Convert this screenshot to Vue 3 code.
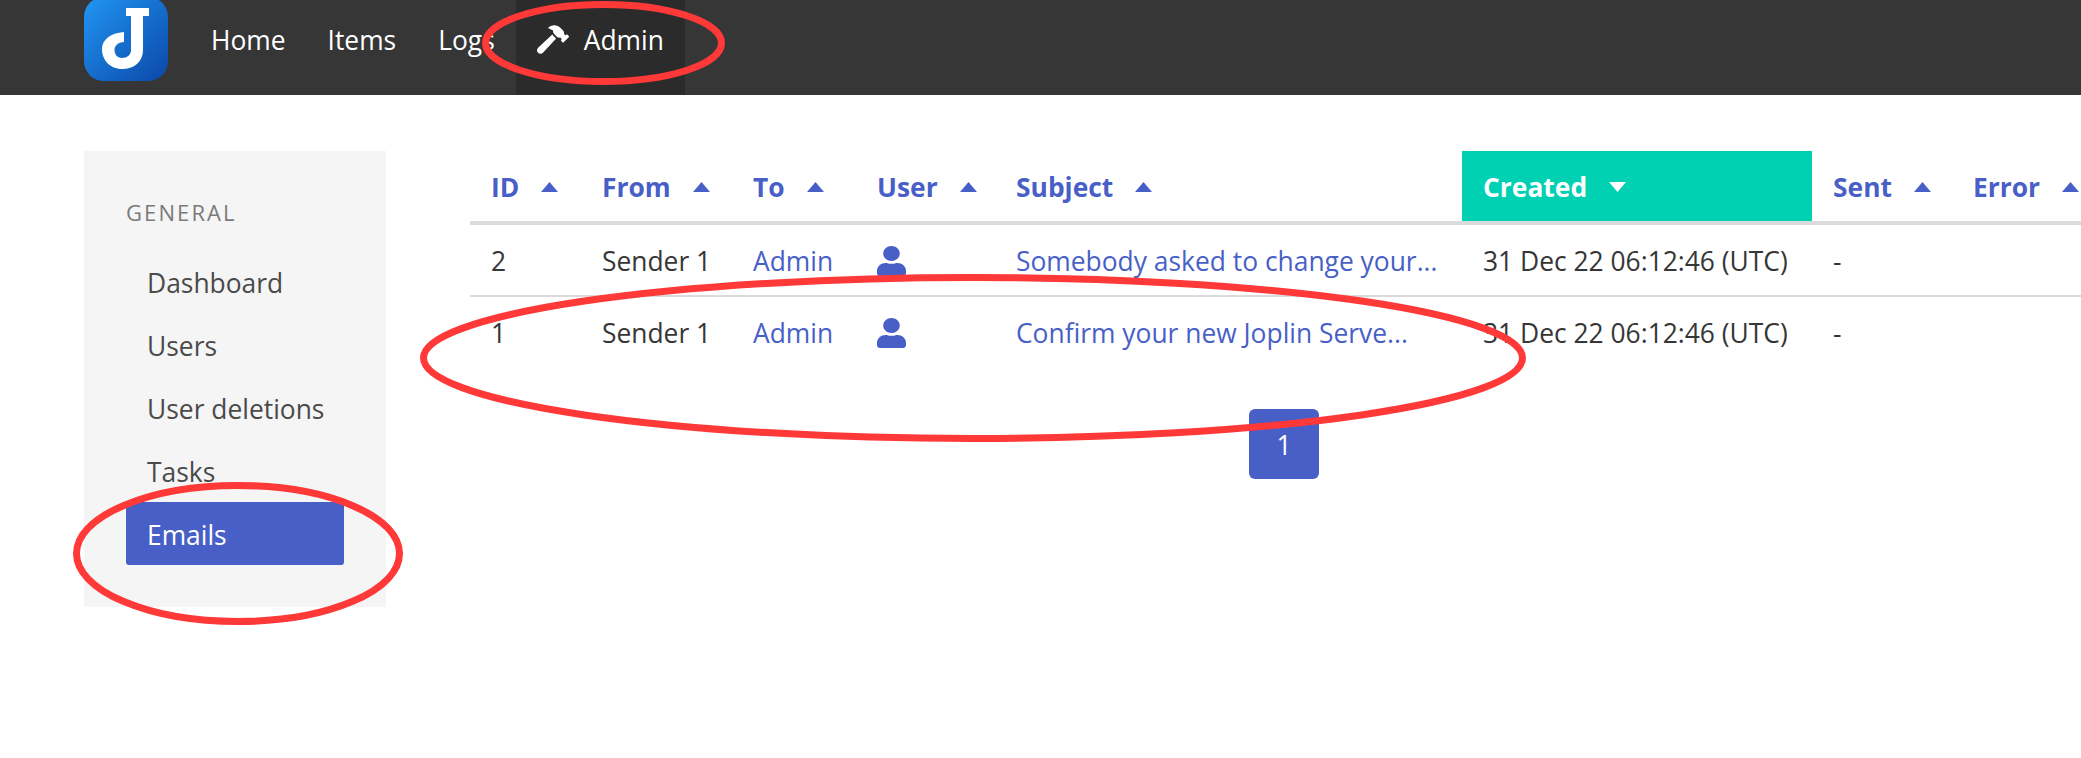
<template>
  <div class="page">
    <nav class="navbar">
      <svg class="logo" viewBox="84 -3 84 84">
        <defs>
          <linearGradient id="logoGrad" x1="0" y1="0" x2="1" y2="1">
            <stop offset="0" stop-color="#2196f3" />
            <stop offset="1" stop-color="#0b47a8" />
          </linearGradient>
        </defs>
        <rect x="84" y="-3" width="84" height="84" rx="20" fill="url(#logoGrad)" />
        <path
          fill="#fff"
          d="M126 8H149V16H143V50C143 62 134 69 122 69C110 69 102 60 102 49C102 40 110 33 124 32V42C118 42 114.5 46 114.5 50C114.5 55 118 58 122 58C127 58 131 55 131 50V16H126Z"
        />
      </svg>
      <a v-for="item in navItems" :key="item" class="nav-item">{{ item }}</a>
      <a class="nav-item is-active">
        <svg class="hammer" viewBox="0 0 576 512">
          <path
            fill="#fff"
            d="M571.31 193.94l-22.63-22.63c-6.25-6.25-16.38-6.25-22.63 0l-11.31 11.31-28.9-28.9c5.63-21.31.36-44.9-16.35-61.61l-45.25-45.25c-62.48-62.48-163.79-62.48-226.28 0l90.51 45.25v18.75c0 16.97 6.74 33.25 18.75 45.25l49.14 49.14c16.71 16.71 40.3 21.98 61.61 16.35l28.9 28.9-11.31 11.31c-6.25 6.25-6.25 16.38 0 22.63l22.63 22.63c6.25 6.25 16.38 6.25 22.63 0l90.51-90.51c6.25-6.25 6.25-16.38 0-22.63zm-286.72-15.2c-3.7-3.7-6.84-7.79-9.85-11.95L19.64 404.96c-25.57 23.88-26.26 64.19-1.53 88.93s65.05 24.05 88.93-1.53l238.13-255.07c-3.96-2.91-7.9-5.87-11.44-9.41l-49.14-49.14z"
          />
        </svg>
        Admin
      </a>
    </nav>

    <main class="main">
      <aside class="sidebar">
        <p class="menu-label">GENERAL</p>
        <ul class="menu-list">
          <li v-for="item in menuItems" :key="item">
            <a :class="{ active: item === 'Emails' }">{{ item }}</a>
          </li>
        </ul>
      </aside>

      <section class="content">
        <table class="table">
          <colgroup>
            <col v-for="col in columns" :key="col.label" :style="{ width: col.width + 'px' }" />
          </colgroup>
          <thead>
            <tr>
              <th v-for="col in columns" :key="col.label" :class="{ sorted: col.sorted }">
                <span class="th-inner">
                  {{ col.label }}
                  <svg class="caret" viewBox="0 0 17 10">
                    <path :d="col.sorted ? 'M0 0H17L8.5 10Z' : 'M8.5 0L17 10H0Z'" />
                  </svg>
                </span>
              </th>
            </tr>
          </thead>
          <tbody>
            <tr v-for="row in rows" :key="row.id">
              <td>{{ row.id }}</td>
              <td>Sender 1</td>
              <td class="link">Admin</td>
              <td>
                <svg class="user" viewBox="0 0 448 512" preserveAspectRatio="none">
                  <path
                    d="M224 256c70.7 0 128-57.3 128-128S294.7 0 224 0 96 57.3 96 128s57.3 128 128 128zm89.6 32h-16.7c-22.2 10.2-46.9 16-72.9 16s-50.6-5.8-72.9-16h-16.7C60.2 288 0 348.2 0 422.4V464c0 26.5 21.5 48 48 48h352c26.5 0 48-21.5 48-48v-41.6c0-74.2-60.2-134.4-134.4-134.4z"
                  />
                </svg>
              </td>
              <td class="link">{{ row.subject }}</td>
              <td>31 Dec 22 06:12:46 (UTC)</td>
              <td>-</td>
              <td></td>
            </tr>
          </tbody>
        </table>
        <div class="pagination">
          <a class="page-btn">1</a>
        </div>
      </section>
    </main>

    <!-- red marks drawn over the screenshot -->
    <svg class="marks" viewBox="0 0 2081 758">
      <ellipse cx="603.5" cy="43" rx="118" ry="38.5" />
      <ellipse cx="238" cy="553.5" rx="161.5" ry="68" />
      <ellipse cx="973" cy="358" rx="549.5" ry="80.5" />
    </svg>
  </div>
</template>

<script setup>
const navItems = ['Home', 'Items', 'Logs']
const menuItems = ['Dashboard', 'Users', 'User deletions', 'Tasks', 'Emails']

const columns = [
  { label: 'ID', width: 111 },
  { label: 'From', width: 151 },
  { label: 'To', width: 124 },
  { label: 'User', width: 139 },
  { label: 'Subject', width: 467 },
  { label: 'Created', width: 350, sorted: true },
  { label: 'Sent', width: 140 },
  { label: 'Error', width: 146 }
]

const rows = [
  { id: 2, subject: 'Somebody asked to change your...' },
  { id: 1, subject: 'Confirm your new Joplin Serve...' }
]
</script>

<style>
html,
body {
  margin: 0;
  background: #fff;
}
</style>

<style scoped>
.page {
  position: relative;
  width: 2081px;
  height: 758px;
  overflow: hidden;
  font-family: "Open Sans", "Noto Sans", sans-serif;
  font-size: 26.4px;
  color: #363636;
}

.navbar {
  display: flex;
  align-items: stretch;
  height: 95px;
  padding-left: 84px;
  background: #363636;
}

.logo {
  width: 84px;
  height: 84px;
  margin: -3px 22px 0 0;
}

.nav-item {
  display: flex;
  align-items: center;
  padding: 0 21px 16px;
  color: #fff;
}

.nav-item.is-active {
  gap: 15px;
  background: #2b2b2b;
}

.hammer {
  width: 32px;
  height: 29px;
}

.main {
  display: flex;
  align-items: flex-start;
  padding: 56px 0 0 84px;
}

.sidebar {
  flex: none;
  box-sizing: border-box;
  width: 302px;
  height: 456px;
  padding: 42px;
  background: #f5f5f5;
}

.menu-label {
  margin: 0 0 18px;
  height: 39px;
  line-height: 38px;
  font-size: 22px;
  letter-spacing: 2.1px;
  color: #7a7a7a;
}

.menu-list {
  margin: 0;
  padding: 0;
  list-style: none;
}

.menu-list a {
  display: block;
  height: 63px;
  line-height: 66px;
  padding-left: 21px;
  border-radius: 3px;
  color: #4a4a4a;
}

.menu-list a.active {
  background: #485fc7;
  color: #fff;
}

.content {
  flex: none;
  width: 1628px;
  margin-left: 84px;
}

.table {
  width: 100%;
  table-layout: fixed;
  border-collapse: collapse;
}

.table th {
  height: 69px;
  padding: 1px 21px 0;
  text-align: left;
  font-weight: 700;
  color: #485fc7;
  border-bottom: 4px solid #dbdbdb;
  background-clip: padding-box;
}

.table th.sorted {
  color: #fff;
  background-color: #00d1b2;
}

.th-inner {
  display: flex;
  align-items: center;
  gap: 22px;
  white-space: nowrap;
}

.caret {
  flex: none;
  width: 17px;
  height: 10px;
  fill: #485fc7;
}

.sorted .caret {
  fill: #fff;
}

.table td {
  height: 68px;
  padding: 2px 21px 0;
  white-space: nowrap;
}

.table tbody tr:first-child td {
  border-bottom: 2px solid #dbdbdb;
}

.link {
  color: #485fc7;
}

.user {
  display: block;
  width: 29px;
  height: 30px;
  fill: #485fc7;
}

.pagination {
  display: flex;
  justify-content: center;
  margin-top: 42px;
}

.page-btn {
  width: 70px;
  height: 70px;
  line-height: 72px;
  text-align: center;
  border-radius: 6px;
  background: #485fc7;
  color: #fff;
}

.marks {
  position: absolute;
  top: 0;
  left: 0;
  width: 2081px;
  height: 758px;
  pointer-events: none;
}

.marks ellipse {
  fill: none;
  stroke: #ff3838;
  stroke-width: 7;
}
</style>
